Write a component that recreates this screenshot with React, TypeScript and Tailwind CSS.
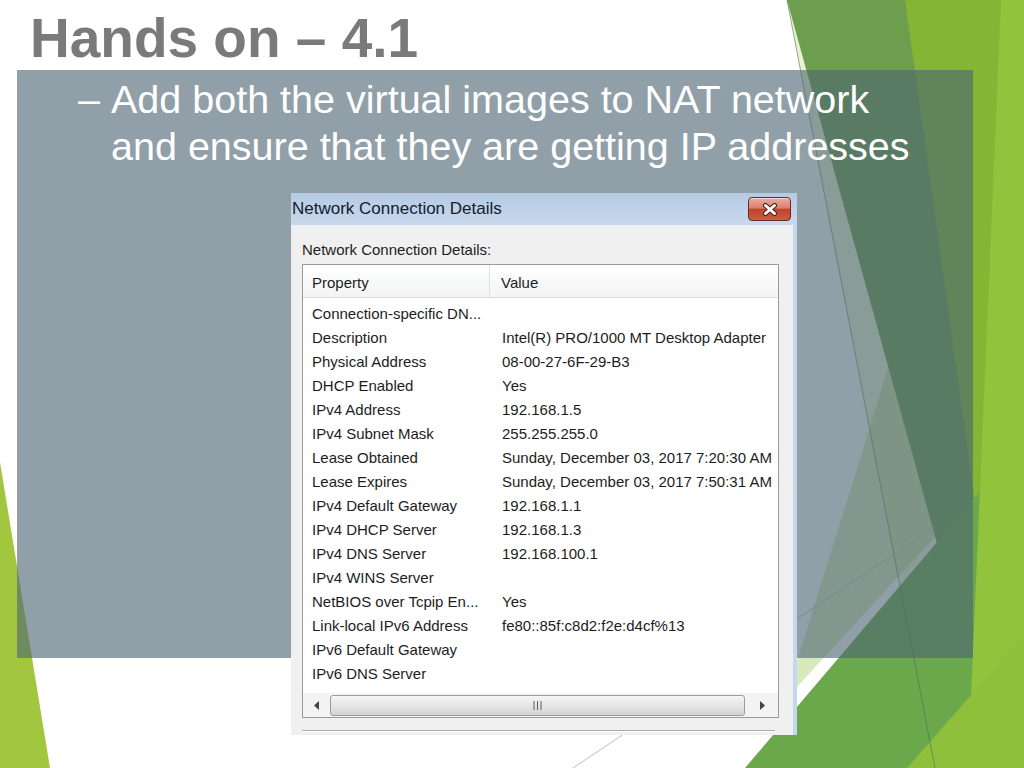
import React from "react";

const rows: [string, string][] = [
  ["Connection-specific DN...", ""],
  ["Description", "Intel(R) PRO/1000 MT Desktop Adapter"],
  ["Physical Address", "08-00-27-6F-29-B3"],
  ["DHCP Enabled", "Yes"],
  ["IPv4 Address", "192.168.1.5"],
  ["IPv4 Subnet Mask", "255.255.255.0"],
  ["Lease Obtained", "Sunday, December 03, 2017 7:20:30 AM"],
  ["Lease Expires", "Sunday, December 03, 2017 7:50:31 AM"],
  ["IPv4 Default Gateway", "192.168.1.1"],
  ["IPv4 DHCP Server", "192.168.1.3"],
  ["IPv4 DNS Server", "192.168.100.1"],
  ["IPv4 WINS Server", ""],
  ["NetBIOS over Tcpip En...", "Yes"],
  ["Link-local IPv6 Address", "fe80::85f:c8d2:f2e:d4cf%13"],
  ["IPv6 Default Gateway", ""],
  ["IPv6 DNS Server", ""],
];

// green facets of the slide theme
function FacetArt() {
  return (
    <svg
      className="absolute inset-0"
      width="1024"
      height="768"
      viewBox="0 0 1024 768"
    >
      <polygon points="0,462 0,768 50,768" fill="#a2c73f" />
      <polygon
        points="787,0 1024,0 1024,768 935,768"
        fill="#90c226"
        fillOpacity="0.2"
      />
      <polygon
        points="900,330 785,700 1024,440"
        fill="#a8cf6a"
        fillOpacity="0.45"
      />
      <polygon points="787,0 1024,0 1024,768 999,768" fill="#6c9e4d" />
      <polygon points="905,0 1024,0 1024,768 1012,768" fill="#84b535" />
      <polygon points="745,768 1024,440 1024,768" fill="#6aa84b" />
      <polygon points="1001,0 1024,0 1024,768 968,768" fill="#92c33d" />
      <polygon points="907,768 1024,768 1024,635" fill="#8fc03b" />
      <line
        x1="787"
        y1="0"
        x2="935"
        y2="768"
        stroke="#4f6f55"
        strokeOpacity="0.6"
        strokeWidth="1"
      />
      <line
        x1="573"
        y1="768"
        x2="935"
        y2="527"
        stroke="#bdbdbd"
        strokeWidth="1"
      />
    </svg>
  );
}

function CloseButton() {
  return (
    <div className="w-[43px] h-[24px] rounded-[4px] border border-[#6a2a20] bg-[linear-gradient(to_bottom,#e9aea2_0%,#d9806f_45%,#c1432d_52%,#cc5c40_100%)] shadow-[inset_0_1px_0_rgba(255,255,255,0.55)] flex items-center justify-center">
      <svg width="16" height="13" viewBox="0 0 16 13">
        <path
          d="M3.5 2.5 L12.5 10.5 M12.5 2.5 L3.5 10.5"
          stroke="#4a1e17"
          strokeWidth="5"
          strokeLinecap="round"
        />
        <path
          d="M3.5 2.5 L12.5 10.5 M12.5 2.5 L3.5 10.5"
          stroke="#ffffff"
          strokeWidth="3"
          strokeLinecap="round"
        />
      </svg>
    </div>
  );
}

function Scrollbar() {
  return (
    <div className="h-[24px] flex items-center bg-[#f3f3f3]">
      <div className="w-[27px] flex justify-center">
        <svg width="6" height="9" viewBox="0 0 6 9">
          <path d="M5 0 L0 4.5 L5 9 Z" fill="#444" />
        </svg>
      </div>
      <div className="flex-1 h-[21px] rounded-[3px] border border-[#9b9b9b] bg-gradient-to-b from-[#f6f6f6] via-[#e6e6e6] to-[#d3d3d3] flex items-center justify-center">
        <svg width="9" height="9" viewBox="0 0 9 9">
          <path d="M1 0 V9 M4.5 0 V9 M8 0 V9" stroke="#5a5a5a" strokeWidth="1" />
        </svg>
      </div>
      <div className="w-[33px] flex justify-center">
        <svg width="6" height="9" viewBox="0 0 6 9">
          <path d="M1 0 L6 4.5 L1 9 Z" fill="#444" />
        </svg>
      </div>
    </div>
  );
}

function DetailsDialog() {
  return (
    <div className="ml-[274px] mt-[23px] w-[506px] h-[542px] flex flex-col overflow-hidden text-[#1d1d1d]">
      <div className="h-[32px] shrink-0 flex items-center justify-between pl-px pr-[6px] bg-gradient-to-b from-[#b5cae3] to-[#c8d9ed]">
        <span className="text-[17px] text-[#15202e]">Network Connection Details</span>
        <CloseButton />
      </div>
      <div className="flex-1 flex">
        <div className="flex-1 bg-[#f0f0f0] pl-[11px] pr-[14px] pt-[16px] flex flex-col">
          <div className="text-[15px] leading-[18px]">Network Connection Details:</div>
          <div className="mt-[5px] h-[454px] border border-[#9a9a9a] bg-white flex flex-col">
            <div className="h-[33px] shrink-0 flex items-center bg-gradient-to-b from-white to-[#f3f4f6] border-b border-[#dcdcdc] text-[15px]">
              <div className="w-[187px] h-full flex items-center pt-[4px] pl-[9px] border-r border-[#e2e2e2]">
                Property
              </div>
              <div className="pl-[11px] pt-[4px]">Value</div>
            </div>
            <div className="flex-1 pt-[4px]">
              {rows.map(([name, value]) => (
                <div
                  key={name}
                  className="h-[24px] grid grid-cols-[190px_1fr] items-center pl-[9px] text-[15px] whitespace-nowrap overflow-hidden"
                >
                  <span>{name}</span>
                  <span>{value}</span>
                </div>
              ))}
            </div>
            <Scrollbar />
          </div>
          <div className="mt-[12px] h-px bg-[#a9a9a9] mr-[4px]" />
          <div className="h-px bg-white mr-[4px]" />
        </div>
        <div className="w-[4px] bg-[#c5d7ec]" />
      </div>
    </div>
  );
}

function App() {
  return (
    <div className="relative w-[1024px] h-[768px] overflow-hidden bg-white font-['Liberation_Sans',Arial,sans-serif]">
      <FacetArt />
      <div className="relative flex flex-col">
        <h1 className="h-[70px] pl-[30px] pt-[11px] text-[55px] leading-[55px] font-bold text-[#7a7a7a]">
          Hands on – 4.1
        </h1>
        <section className="ml-[17px] w-[956px] h-[588px] pt-[6px] bg-[rgba(77,101,114,0.62)]">
          <div className="flex pl-[61px] text-[39.5px] leading-[47px] text-white">
            <span className="w-[33px] shrink-0">–</span>
            <p className="w-[810px]">
              Add both the virtual images to NAT network and ensure that they
              are getting IP addresses
            </p>
          </div>
          <DetailsDialog />
        </section>
      </div>
    </div>
  );
}

export default App;
